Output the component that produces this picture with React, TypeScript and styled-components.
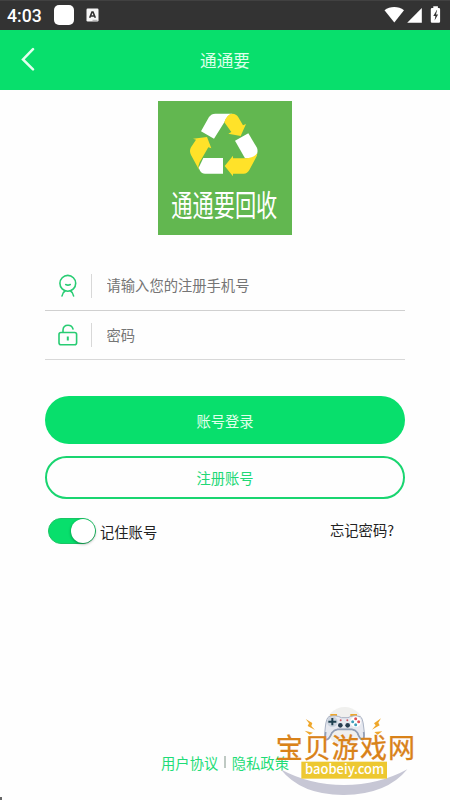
import React from 'react';
import styled, { createGlobalStyle } from 'styled-components';

const GREEN = '#08df6c';

const GlobalStyle = createGlobalStyle`
  * { box-sizing: border-box; }
  body { margin: 0; background: #fefefe; }
  button, input { font-family: inherit; }
`;

const Screen = styled.div`
  position: relative;
  width: 450px;
  height: 800px;
  overflow: hidden;
  display: flex;
  flex-direction: column;
  background: #fefefe;
  font-family: 'Noto Sans CJK SC', sans-serif;
  font-size: 14.3px;
  color: #222;
`;

const StatusBar = styled.div`
  height: 30px;
  flex: none;
  display: flex;
  align-items: center;
  justify-content: space-between;
  padding: 0 8px 0 7px;
  background: linear-gradient(#484848 0, #333 1.5px);
  color: #fff;
`;

const StatusGroup = styled.div`
  display: flex;
  align-items: center;
`;

const Clock = styled.span`
  width: 47px;
  font: 500 17.6px/30px Roboto, sans-serif;
  padding-top: 1px;
`;

const AppChip = styled.span`
  width: 19.5px;
  height: 20px;
  border-radius: 5px;
  background: #fff;
  margin-right: 12px;
`;

const TopBar = styled.header`
  height: 60px;
  flex: none;
  display: grid;
  grid-template-columns: 60px 1fr 60px;
  align-items: center;
  background: ${GREEN};
`;

const BackButton = styled.button`
  height: 60px;
  border: 0;
  padding: 0 0 2px 20px;
  background: none;
  display: flex;
  align-items: center;
`;

const Title = styled.h1`
  margin: 0;
  text-align: center;
  font-size: 16.6px;
  font-weight: 400;
  line-height: 60px;
  color: #dcffe9;
`;

const Content = styled.main`
  padding: 11px 45px 0;
  display: flex;
  flex-direction: column;
`;

const LogoBox = styled.div`
  width: 134px;
  height: 134px;
  margin: 0 auto 26px;
  display: flex;
`;

const Field = styled.label<{ $height: number; $line: string }>`
  height: ${(p) => p.$height}px;
  display: flex;
  align-items: center;
  border-bottom: 1.5px solid ${(p) => p.$line};
  padding-left: 12px;
`;

const FieldDivider = styled.span`
  width: 1px;
  height: 24px;
  margin: 0 14.5px 0 12px;
  background: #d8d8d8;
`;

const FieldInput = styled.input`
  flex: 1;
  min-width: 0;
  height: 30px;
  border: 0;
  padding: 0 0 2px;
  outline: 0;
  background: none;
  font-size: 14.3px;
  &::placeholder { color: #757575; opacity: 1; }
`;

const Actions = styled.div`
  margin-top: 36px;
  display: flex;
  flex-direction: column;
  gap: 12px;
`;

const PillButton = styled.button<{ $outlined?: boolean }>`
  height: ${(p) => (p.$outlined ? 43 : 48)}px;
  border-radius: 24px;
  border: ${(p) => (p.$outlined ? '2px solid #19d570' : '0')};
  background: ${(p) => (p.$outlined ? '#fefefe' : GREEN)};
  color: ${(p) => (p.$outlined ? '#20d875' : '#e0ffeb')};
  font-size: 14.3px;
  padding: 0;
`;

const OptionRow = styled.div`
  margin-top: 18px;
  padding: 0 11px 0 3px;
  height: 28px;
  display: flex;
  justify-content: space-between;
`;

const Remember = styled.div`
  display: flex;
  align-items: center;
  gap: 4px;
  line-height: 28px;
`;

const RememberLabel = styled.span`
  padding-top: 1px;
`;

const Switch = styled.span`
  width: 48px;
  height: 26px;
  border-radius: 13px;
  border: 1px solid #1bc565;
  background: ${GREEN};
  display: flex;
  justify-content: flex-end;
`;

const Knob = styled.span`
  width: 24px;
  height: 24px;
  border-radius: 50%;
  background: #fff;
  box-shadow: 0 1px 3px rgba(0, 0, 0, 0.4);
`;

const Forgot = styled.a`
  line-height: 25px;
`;

const Legal = styled.footer`
  margin: auto 0 27px;
  height: 22px;
  display: flex;
  justify-content: center;
  align-items: center;
  gap: 6px;
  color: #1fdc77;
`;

const LegalDivider = styled.span`
  width: 1.5px;
  height: 12px;
  background: #bfc9c3;
`;

const Watermark = styled.div`
  position: absolute;
  left: 270px;
  top: 700px;
  width: 150px;
  height: 100px;
`;

const CornerMark = styled.span`
  position: absolute;
  left: 0;
  bottom: 0;
  width: 1.5px;
  height: 3px;
  background: #666;
`;

const InputMethodIcon = () => (
  <svg width="13" height="14" viewBox="0 0 13 14">
    <rect x="0.5" y="0.5" width="12" height="13" rx="1.2" fill="#f7f7f7" />
    <path d="M3.7 9.7 6 4h1l2.3 5.7M4.6 8h3.8" fill="none" stroke="#333" strokeWidth="1.6" />
    <path d="M6.5 12.3h5" stroke="#aaa" strokeWidth="1" />
  </svg>
);

const SignalIcons = () => (
  <svg width="58" height="20" viewBox="0 0 58 20" fill="#fff">
    <path d="M.5 5.3C6 1 14.5 1 20 5.3L10.3 17.5Z" />
    <path d="M23.2 17.8 37.8 3v14.8Z" />
    <path d="M49.3 1.2h4.6V3h1q1.2 0 1.2 1.2v12.400q0 1.200-1.200 1.200h-6.900q-1.200 0-1.200-1.200V4.200Q46.800 3 48 3h1.300Z" />
    <path d="M52.800 5 49.300 11h2.100l-.8 4.500 3.500-5.900h-2.100l1.100-4.600Z" fill="#333" />
  </svg>
);

const BackIcon = () => (
  <svg width="16" height="24" viewBox="0 0 16 24">
    <path d="M13 2.200 3 12.500l10 9.800" fill="none" stroke="#e4ffef" strokeWidth="2.500" strokeLinecap="round" />
  </svg>
);

const RecycleLogo = () => (
  <svg width="134" height="134" viewBox="24 18 402 402" role="img">
    <rect x="24" y="18" width="402" height="402" fill="#62b750" />
    <g transform="translate(105 39)">
      <g fill="#fff">
        <path d="M48 70 72 27Q79 17 91 17H142Q126 20 118 43L87 92Z" />
        <path d="m150 98 40-22 25 42q6 12-1 24l-7 9h-27Z" />
        <path d="M114 150v47H60q-10 0-15-9l-4-9 14-29Z" />
      </g>
      <g fill="#ffe229">
        <path d="M118 43Q126 17 142 17q12 0 18 11l14 24 9-4-16 36-37-7 9-5Z" />
        <path d="m24 92 42-5 13 34-9-3-26 45q-6 10-2 22L18 141q-6-12 0-23l15-23Z" />
        <path d="m119 174 25-31v8h37q25 0 36-16 0 8-6 17l-18 34q-6 11-17 11h-32v8Z" />
      </g>
    </g>
    <text
      x="0" y="0" transform="translate(64 364) scale(1 1.4)" fill="#fff"
      fontFamily="Noto Sans CJK SC, sans-serif" fontSize="64" textLength="318" lengthAdjust="spacingAndGlyphs"
    >通通要回收</text>
  </svg>
);

const UserIcon = () => (
  <svg width="22" height="26" viewBox="0 0 22 26" fill="none" stroke="#28cc73" strokeWidth="1.600" strokeLinecap="round">
    <circle cx="10.800" cy="10.300" r="7.900" />
    <path d="M8.700 11.500q2.300 1.200 4.600 0M8 18q-2.500 1.500-3 5M13.600 18q2.500 1.500 3 5" />
  </svg>
);

const LockIcon = () => (
  <svg width="22" height="26" viewBox="0 0 22 26" fill="none" stroke="#28cc73" strokeWidth="1.600" strokeLinecap="round">
    <rect x="2" y="10.500" width="17.600" height="12.300" rx="2" />
    <path d="M6 10.300V8q.3-4.800 5-4.800 4 0 5 3.800" />
    <path d="M10.800 14.500v4" strokeWidth="2" strokeLinecap="butt" />
  </svg>
);

const SiteMark = () => (
  <svg width="150" height="100" viewBox="0 0 450 300">
    <circle cx="224" cy="78" r="57" fill="#f0f0ee" />
    <path d="M32 208Q118 255 222 255T412 208Q350 284 222 285T32 208Z" fill="#c7c7d5" />
    <g fill="#efa72b">
      <path d="m107 57 20 12-3 9 11 12-22-12 4-8ZM104 92l25 6-10 6ZM333 55l-21 15 5 6-11 13 23-13-4-8ZM337 94l-24 2 10 8Z" />
      <path d="M181 42h20v8h-20ZM241 42h20v8h-20Z" />
    </g>
    <path d="M177 50q22-6 37 3h20q15-9 37-3 7 3 10 31 6 38-4 38-7 0-15-21-5-8-16-10h-44q-11 2-16 10-9 21-16 21-9 0-4-38 3-28 11-31Z" fill="#e7e9f0" stroke="#a9b2c4" strokeWidth="3" />
    <path d="M167 96q-3 25 3 23 7 0 16-21 6-8 17-10h43q11 2 16 10 8 21 15 21 7 0 4-23" fill="none" stroke="#929eb5" strokeWidth="5" />
    <circle cx="187" cy="65" r="16" fill="#ccd4df" />
    <circle cx="257" cy="65" r="16" fill="#fff" />
    <path d="M184 54h6v8h9v6h-9v8h-6v-8h-9v-6h9Z" fill="#1f4050" />
    <g fill="#e05158"><circle cx="257" cy="56" r="4.500" /><circle cx="266" cy="65" r="4.500" /></g>
    <g fill="#409eba"><circle cx="257" cy="74" r="4.500" /><circle cx="248" cy="65" r="4.500" /></g>
    <g fill="#273c50"><circle cx="211" cy="76" r="7" /><circle cx="233" cy="76" r="7" /></g>
    <g fill="#d15762"><circle cx="212" cy="61" r="3" /><circle cx="232" cy="61" r="3" /></g>
    <text x="17" y="173" fontFamily="Noto Sans CJK SC, sans-serif" fontSize="81" fontWeight="400" fill="#d98219" stroke="#d98219" strokeWidth="1" textLength="418">宝贝游戏网</text>
    <rect x="94" y="185" width="257" height="51" fill="#edc831" />
    <text x="105" y="223" fontFamily="Noto Sans CJK SC, sans-serif" fontSize="40" fontWeight="500" fill="#fff" textLength="238" lengthAdjust="spacingAndGlyphs">baobeiy.com</text>
  </svg>
);

export default function App() {
  return (
    <Screen>
      <GlobalStyle />
      <StatusBar>
        <StatusGroup>
          <Clock>4:03</Clock>
          <AppChip />
          <InputMethodIcon />
        </StatusGroup>
        <SignalIcons />
      </StatusBar>
      <TopBar>
        <BackButton aria-label="返回"><BackIcon /></BackButton>
        <Title>通通要</Title>
      </TopBar>
      <Content>
        <LogoBox><RecycleLogo /></LogoBox>
        <Field $height={50} $line="#d0d0d0">
          <UserIcon />
          <FieldDivider />
          <FieldInput placeholder="请输入您的注册手机号" />
        </Field>
        <Field $height={49} $line="#d8d8d8">
          <LockIcon />
          <FieldDivider />
          <FieldInput type="password" placeholder="密码" />
        </Field>
        <Actions>
          <PillButton>账号登录</PillButton>
          <PillButton $outlined>注册账号</PillButton>
        </Actions>
        <OptionRow>
          <Remember>
            <Switch><Knob /></Switch>
            <RememberLabel>记住账号</RememberLabel>
          </Remember>
          <Forgot>忘记密码?</Forgot>
        </OptionRow>
      </Content>
      <Legal>
        <span>用户协议</span>
        <LegalDivider />
        <span>隐私政策</span>
      </Legal>
      <Watermark><SiteMark /></Watermark>
      <CornerMark />
    </Screen>
  );
}
